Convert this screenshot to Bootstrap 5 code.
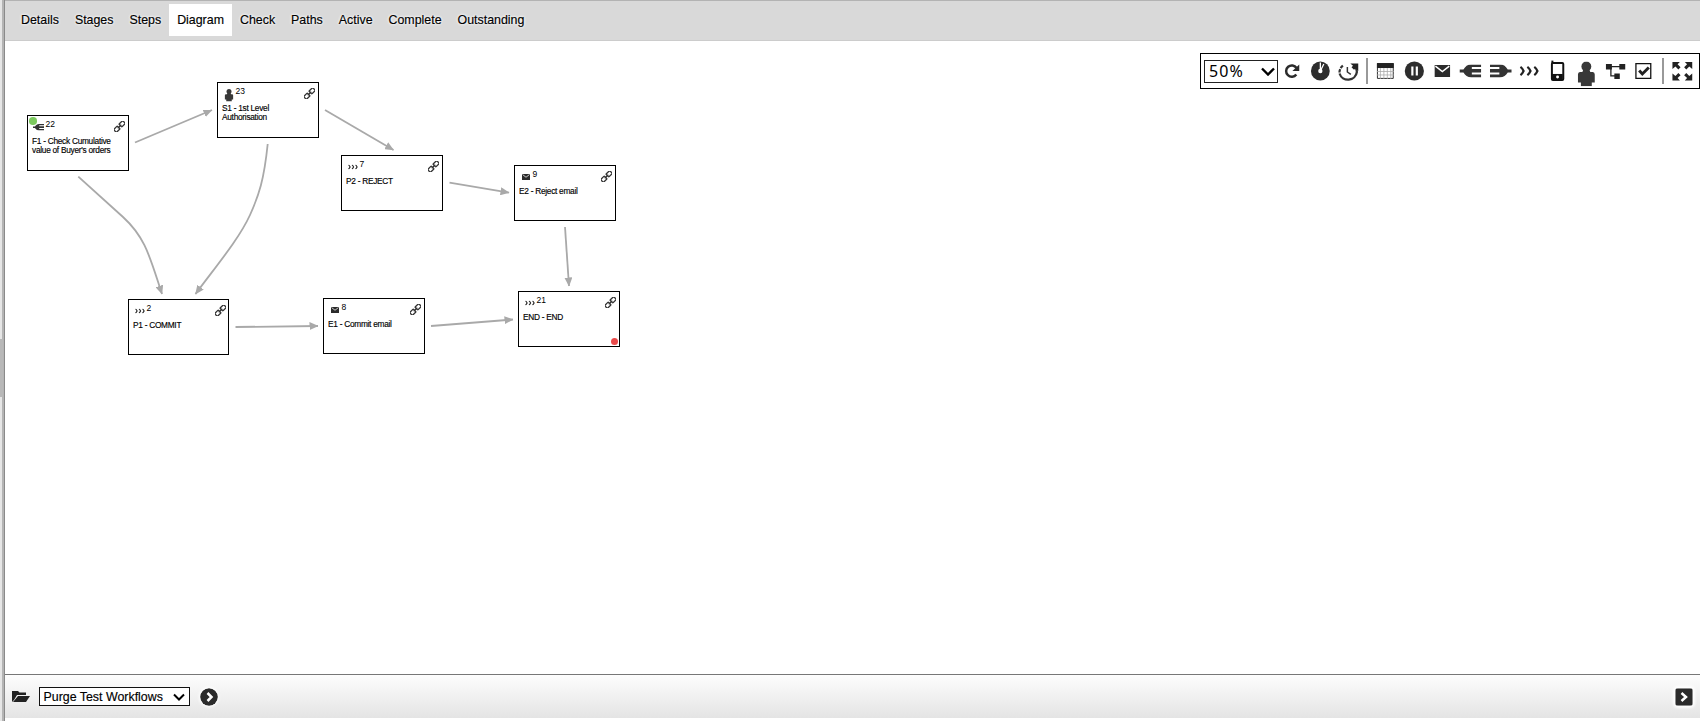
<!DOCTYPE html>
<html lang="en">
<head>
<meta charset="utf-8">
<title>Workflow diagram</title>
<link rel="stylesheet" href="https://cdn.jsdelivr.net/npm/bootstrap@5.3.0/dist/css/bootstrap.min.css">
<style>
body{font-family:"Liberation Sans",Arial,sans-serif;font-size:12px;line-height:16px;color:#000;height:721px;overflow:hidden}
.splitter{width:5px;background:linear-gradient(90deg,#e6e6e6 0 2px,#b4b4b4 2px 4px,#8a8a8a 4px)}
.grip{width:3px;height:58px;margin-top:339px;background:#b8b8b8}
.tabs{height:41px;background:#d9d9d9;border-top:1px solid #b3b3b3;border-bottom:1px solid #ccc;padding:3px 0 4px 8px;font-size:12.4px}
.tabs .nav-link{color:#000;padding:8px 8px 0;height:32px;text-shadow:0 0 3px #fff,0 0 3px #fff;-webkit-text-stroke:.15px #000}
.tabs .nav-link.active{background:#fff}
.canvas{height:633px;background:#fff}
.tools{top:12px;right:0;width:500px;height:36px;border:1px solid #000;padding-left:3px;background:#fff}
.zoombox{width:74px;height:23px;border:1px solid #222;font:16px/22px "Noto Sans",sans-serif;letter-spacing:1.1px;padding:0 2px 0 4px}
.tools svg.tool{width:28.7px;height:34px;flex:none;margin-top:-1px}
.rule{width:2px;height:26px;background:#999;flex:none}
.node{width:102px;height:56px;border:1px solid #000;background:#fff;font-size:8.3px;letter-spacing:-.27px;line-height:9px}
.node .title{left:4px;top:20.5px;white-space:nowrap;-webkit-text-stroke:.15px #000}
.node .num{left:17.600px;top:3.500px;font-size:8.500px;letter-spacing:-.1px}
.node .link{left:85.500px;top:5px;width:11px;height:11px}
.node .kind{left:5px;top:5px;width:12px;height:14px}
.dot{width:7.5px;height:7.5px;border-radius:50%}
.foot{height:44px;border-top:1px solid #777;background:linear-gradient(#fdfdfd,#e4e4e4);padding:0 7px 0 6px}
.picker{width:151px;height:19px;border:1px solid #111;background:#fff;font-size:12.4px;padding:0 4px 0 4px;margin:0 9.500px 0 8px;-webkit-text-stroke:.15px #000}
.next{border-radius:3px;box-shadow:0 0 3px 2px #fff}
.go{border-radius:50%;box-shadow:0 0 3px 1px #fff}
</style>
</head>
<body class="d-flex">
<svg width="0" height="0" class="position-absolute">
<defs>
<symbol id="mail" viewBox="0 0 16 12"><path fill="#2b2b2b" d="M0 0h16v12H0z"/><path d="M1 1l7 5.500L15 1" fill="none" stroke="#fff" stroke-width="1.500"/></symbol>
<symbol id="plug" viewBox="0 0 22 13"><path fill="#333" d="M0 5h4c2-3 4-5 8-5h10v2.500H12.500v2H22v3.600H12.500v2H22V13H12C8 13 6 11 4 8H0z"/></symbol>
<symbol id="chevs" viewBox="0 0 20 10"><path d="M1 .8q2 1.500 3.200 4.200Q3 7.700 1 9.200M8 .8q2 1.500 3.200 4.200Q10 7.700 8 9.200M15 .8q2 1.500 3.200 4.200Q17 7.700 15 9.200" fill="none" stroke="#222" stroke-width="2.200"/></symbol>
<symbol id="person" viewBox="0 0 18 25"><circle cx="9" cy="5" r="5" fill="#383838"/><path fill="#383838" d="M6 8h6l1 2.500h2.500q2 .3 2 2.500V21h-3v4h-11v-4h-3v-8q0-2.200 2-2.500H5z"/></symbol>
<symbol id="chain" viewBox="0 0 11 11"><g transform="rotate(-45 5.500 5.500)" fill="none" stroke="#333" stroke-width="1.300"><rect x="-.9" y="3.500" width="5.200" height="4" rx=".6"/><rect x="6.700" y="3.500" width="5.200" height="4" rx=".6"/><path d="M3 5.500h5"/></g></symbol>
<marker id="tip" viewBox="0 0 9 8" refX="8.500" refY="4" markerWidth="9" markerHeight="8" markerUnits="userSpaceOnUse" orient="auto"><path d="M0 0l9 4-9 4z" fill="#a9a9a9"/></marker>
</defs>
</svg>
<div class="splitter flex-shrink-0"><div class="grip"></div></div>
<main class="flex-grow-1 d-flex flex-column">
<nav class="nav tabs flex-nowrap">
<a class="nav-link">Details</a><a class="nav-link">Stages</a><a class="nav-link">Steps</a><a class="nav-link active">Diagram</a><a class="nav-link">Check</a><a class="nav-link">Paths</a><a class="nav-link">Active</a><a class="nav-link">Complete</a><a class="nav-link">Outstanding</a>
</nav>
<section class="canvas position-relative">
<svg class="position-absolute top-0 start-0" width="640" height="340" viewBox="5 41 640 340" fill="none" stroke="#a9a9a9" stroke-width="1.800">
<g marker-end="url(#tip)">
<path d="M135 142.500L212 110"/><path d="M325 110L393.500 150"/><path d="M449.500 182.700L509 192.700"/><path d="M565 227L569 286"/><path d="M235.500 327L318 326"/><path d="M431 326L513 319.500"/>
<path d="M78.300 176.700L123 217C146 238 150 258 162 294"/><path d="M267.700 144C264 180 259 195 250 215C239 239 217 265 195.500 294"/>
</g>
</svg>
<div class="node position-absolute" style="left:22px;top:74px"><i class="dot position-absolute" style="left:1px;top:1px;background:#7cc95e"></i><svg class="kind position-absolute" style="top:4px"><use href="#plug" y="4" width="11" height="6.500"/></svg><span class="num position-absolute">22</span><svg class="link position-absolute"><use href="#chain"/></svg><div class="title position-absolute">F1 - Check Cumulative<br>value of Buyer's orders</div></div>
<div class="node position-absolute" style="left:212px;top:41px"><svg class="kind position-absolute"><use href="#person" x="1.500" y="1" width="9" height="12.500"/></svg><span class="num position-absolute">23</span><svg class="link position-absolute"><use href="#chain"/></svg><div class="title position-absolute">S1 - 1st Level<br>Authorisation</div></div>
<div class="node position-absolute" style="left:336px;top:114px"><svg class="kind position-absolute"><use href="#chevs" x="1" y="3.500" width="10" height="5"/></svg><span class="num position-absolute">7</span><svg class="link position-absolute"><use href="#chain"/></svg><div class="title position-absolute">P2 - REJECT</div></div>
<div class="node position-absolute" style="left:509px;top:124px"><svg class="kind position-absolute"><use href="#mail" x="2" y="3" width="8" height="6"/></svg><span class="num position-absolute">9</span><svg class="link position-absolute"><use href="#chain"/></svg><div class="title position-absolute">E2 - Reject email</div></div>
<div class="node position-absolute" style="left:123px;top:258px;width:101px"><svg class="kind position-absolute"><use href="#chevs" x="1" y="3.500" width="10" height="5"/></svg><span class="num position-absolute">2</span><svg class="link position-absolute"><use href="#chain"/></svg><div class="title position-absolute">P1 - COMMIT</div></div>
<div class="node position-absolute" style="left:318px;top:257px"><svg class="kind position-absolute"><use href="#mail" x="2" y="3" width="8" height="6"/></svg><span class="num position-absolute">8</span><svg class="link position-absolute"><use href="#chain"/></svg><div class="title position-absolute">E1 - Commit email</div></div>
<div class="node position-absolute" style="left:513px;top:250px"><svg class="kind position-absolute"><use href="#chevs" x="1" y="3.500" width="10" height="5"/></svg><span class="num position-absolute">21</span><svg class="link position-absolute"><use href="#chain"/></svg><div class="title position-absolute">END - END</div><i class="dot position-absolute" style="right:1px;bottom:1px;background:#ea4a4a"></i></div>
<div class="tools position-absolute d-flex align-items-center">
<div class="zoombox d-flex align-items-center justify-content-between flex-shrink-0"><span>50%</span><svg width="14" height="9" viewBox="0 0 14 9"><path d="M1 1.500l6 6 6-6" fill="none" stroke="#000" stroke-width="2.400"/></svg></div>
<svg class="tool" viewBox="0 0 29 34"><path d="M18.500 20.500a5.700 5.700 0 1 1 .2-6.500" fill="none" stroke="#2b2b2b" stroke-width="2.500"/><path fill="#2b2b2b" d="M21.500 10.500v6.500h-7z"/></svg>
<svg class="tool" viewBox="0 0 29 34"><circle cx="13.500" cy="17" r="9.500" fill="#2d2d2d"/><path d="M13.500 17V8.500M13.500 17l3.500-7" stroke="#fff" stroke-width="1.300"/><circle cx="13.500" cy="17" r="2.200" fill="#fff"/></svg>
<svg class="tool" viewBox="0 0 29 34"><path d="M8 11.500A9 9 0 0 0 4.500 19" fill="none" stroke="#333" stroke-width="2.200" stroke-dasharray="3.500 1"/><path d="M4.600 19.500a9 9 0 0 0 17.500-1.500q.2-3-2-5" fill="none" stroke="#333" stroke-width="2.300"/><path fill="#222" d="M15.500 9.500H23.500v7.500l-2.700-2.500-1.600 1.300-2.500-2.500 1.500-1.500z"/><path d="M12.500 13v5l3.500 2.500" fill="none" stroke="#333" stroke-width="1.500"/></svg>
<div class="rule" style="margin-left:1.500px;margin-right:3.500px"></div>
<svg class="tool" viewBox="0 0 29 34"><path fill="#fff" stroke="#333" d="M6.500 9.500h16v15h-16z"/><path fill="#222" d="M6 9h17v5H6z"/><path d="M6 17.500h17M6 21h17M9.500 14v11M13 14v11M16.500 14v11M20 14v11" stroke="#aaa" stroke-width=".8"/></svg>
<svg class="tool" viewBox="0 0 29 34"><circle cx="14.500" cy="17" r="9.700" fill="#2d2d2d"/><path d="M12.500 12.500v9M17 12.500v9" stroke="#fff" stroke-width="2.200"/></svg>
<svg class="tool" viewBox="0 0 29 34"><use href="#mail" x="6.500" y="11" width="16" height="12"/></svg>
<svg class="tool" viewBox="0 0 29 34"><use href="#plug" x="2.500" y="10.500" width="22" height="13"/></svg>
<svg class="tool" viewBox="0 0 29 34"><use href="#plug" transform="translate(26 0) scale(-1 1)" x="0" y="10.500" width="22" height="13"/></svg>
<svg class="tool" viewBox="0 0 29 34"><use href="#chevs" x="4.500" y="12" width="20" height="10"/></svg>
<svg class="tool" viewBox="0 0 29 34"><path d="M9.500 6.500v4" stroke="#111" stroke-width="2"/><rect x="9" y="9" width="11.500" height="17" rx="1" fill="#fff" stroke="#111" stroke-width="2"/><path fill="#111" d="M9 20h11v6H9z"/><circle cx="14.700" cy="23" r="1.500" fill="#fff"/></svg>
<svg class="tool" viewBox="0 0 29 34"><use href="#person" x="5.500" y="7.500" width="18" height="25"/></svg>
<svg class="tool" viewBox="0 0 29 34"><path d="M8 12.500h14M10 12.500v9.500h6" fill="none" stroke="#222" stroke-width="1.300"/><path fill="#222" d="M5 10h6v5.500H5zM18.500 10h6v5.500h-6zM13.500 19.500H19V25h-5.500z"/></svg>
<svg class="tool" viewBox="0 0 29 34"><path fill="#fff" stroke="#111" stroke-width="1.300" d="M7 9.500h15v15H7z"/><path d="M10.300 16.500l3.200 3.500 6.500-6.500" fill="none" stroke="#222" stroke-width="3"/></svg>
<div class="rule me-1" style="margin-left:4px"></div>
<svg class="tool" viewBox="0 0 29 34"><g id="q" fill="#222"><path d="M4.500 8h7.500l-2.300 2.300 3 3-2.200 2.200-3-3-3 2.500z"/><path d="M24.500 8h-7.500l2.300 2.300-3 3 2.200 2.200 3-3 3 2.500z"/></g><use href="#q" transform="translate(0 34.500) scale(1 -1)"/></svg>
</div>
</section>
<footer class="foot d-flex align-items-center">
<svg width="20" height="13" viewBox="0 0 20 13"><path fill="#222" d="M1 1h6l1.500 1.500H15V5H6L3 10 1 12zM7 6h12l-4 6H2z"/></svg>
<div class="picker d-flex align-items-center justify-content-between"><span class="text-nowrap" style="margin-left:-.5px">Purge Test Workflows</span><svg width="12" height="8" viewBox="0 0 12 8"><path d="M1 1.500l5 5 5-5" fill="none" stroke="#000" stroke-width="2"/></svg></div>
<svg class="go" width="18" height="18" viewBox="0 0 18 18"><circle cx="9" cy="9" r="8.800" fill="#2b2b2b"/><path d="M7.500 5l4 4-4 4" fill="none" stroke="#fff" stroke-width="2.500"/></svg>
<svg class="next ms-auto" width="18" height="18" viewBox="0 0 18 18"><path fill="#2b2b2b" d="M.5.500h17v17H.5z"/><path d="M6.500 5l4.500 4-4.500 4" fill="none" stroke="#fff" stroke-width="2.500"/></svg>
</footer>
</main>
<script src="https://cdn.jsdelivr.net/npm/bootstrap@5.3.0/dist/js/bootstrap.bundle.min.js"></script>
</body>
</html>
